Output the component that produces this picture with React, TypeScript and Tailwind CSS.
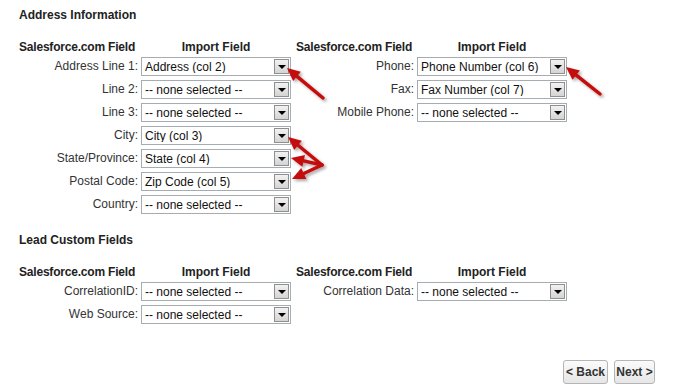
import React from "react";

type Row = { label: string; value: string };

const addressLeft: Row[] = [
  { label: "Address Line 1:", value: "Address (col 2)" },
  { label: "Line 2:", value: "-- none selected --" },
  { label: "Line 3:", value: "-- none selected --" },
  { label: "City:", value: "City (col 3)" },
  { label: "State/Province:", value: "State (col 4)" },
  { label: "Postal Code:", value: "Zip Code (col 5)" },
  { label: "Country:", value: "-- none selected --" },
];

const addressRight: Row[] = [
  { label: "Phone:", value: "Phone Number (col 6)" },
  { label: "Fax:", value: "Fax Number (col 7)" },
  { label: "Mobile Phone:", value: "-- none selected --" },
];

const customLeft: Row[] = [
  { label: "CorrelationID:", value: "-- none selected --" },
  { label: "Web Source:", value: "-- none selected --" },
];

const customRight: Row[] = [
  { label: "Correlation Data:", value: "-- none selected --" },
];

const Select = ({ value }: { value: string }) => (
  <div className="flex h-[19px] w-[150px] items-center border border-[#a5acb2] bg-white">
    <span className="flex-1 truncate pl-[3px] text-[12px] leading-none text-[#111]">
      {value}
    </span>
    <span className="mr-px flex h-[15px] w-[15px] items-center justify-center border border-[#8e8f8f] bg-gradient-to-b from-[#f2f2f2] to-[#d4d4d4]">
      <span className="mt-px h-0 w-0 border-x-[4px] border-t-[4px] border-x-transparent border-t-black" />
    </span>
  </div>
);

const Label = ({ text }: { text: string }) => (
  <div className="whitespace-nowrap text-right text-[12px] leading-[19px] text-[#333]">{text}</div>
);

const FieldGrid = ({ left, right }: { left: Row[]; right: Row[] }) => {
  const n = Math.max(left.length, right.length);
  const rows = [];
  for (let i = 0; i < n; i++) {
    const l = left[i];
    const r = right[i];
    rows.push(
      <React.Fragment key={i}>
        {l ? <Label text={l.label} /> : <div />}
        {l ? <Select value={l.value} /> : <div />}
        {r ? <Label text={r.label} /> : <div />}
        {r ? <Select value={r.value} /> : <div />}
      </React.Fragment>
    );
  }
  return (
    <div className="grid grid-cols-[119px_150px_120px_150px] gap-x-[3px] gap-y-[4px]">
      <div className="mb-[-1px] whitespace-nowrap text-[12px] font-bold leading-[14px] tracking-[-0.2px] text-[#222]">
        Salesforce.com Field
      </div>
      <div className="mb-[-1px] whitespace-nowrap text-center text-[12px] font-bold leading-[14px] text-[#222]">
        Import Field
      </div>
      <div className="mb-[-1px] whitespace-nowrap pl-[2px] text-[12px] font-bold leading-[14px] tracking-[-0.2px] text-[#222]">
        Salesforce.com Field
      </div>
      <div className="mb-[-1px] whitespace-nowrap text-center text-[12px] font-bold leading-[14px] text-[#222]">
        Import Field
      </div>
      {rows}
    </div>
  );
};

const arrows: [number, number, number, number][] = [
  [323, 98, 287, 68],
  [600, 94, 566, 67],
  [322, 165, 288, 137],
  [322, 165, 291, 158],
  [322, 165, 292, 179],
];

const Arrow = ({ t }: { t: [number, number, number, number] }) => {
  const [x1, y1, x2, y2] = t;
  const len = Math.hypot(x2 - x1, y2 - y1);
  const dx = (x2 - x1) / len;
  const dy = (y2 - y1) / len;
  const bx = x2 - dx * 13;
  const by = y2 - dy * 13;
  const nx = -dy * 6;
  const ny = dx * 6;
  return (
    <g>
      <line x1={x1} y1={y1} x2={bx} y2={by} stroke="#c40c0c" strokeWidth={3.5} strokeLinecap="round" />
      <polygon
        points={`${x2},${y2} ${bx + nx},${by + ny} ${bx - nx},${by - ny}`}
        fill="#c40c0c"
      />
    </g>
  );
};

export default function App() {
  return (
    <div className="relative h-[386px] w-[678px] overflow-hidden bg-white font-['Liberation_Sans',Arial,sans-serif]">
      <div className="pl-[19px] pt-[8px]">
        <h2 className="text-[12px] font-bold leading-[14px] text-[#222]">Address Information</h2>
        <div className="mt-[18px]">
          <FieldGrid left={addressLeft} right={addressRight} />
        </div>
        <h2 className="mt-[19px] text-[12px] font-bold leading-[14px] text-[#222]">
          Lead Custom Fields
        </h2>
        <div className="mt-[18px]">
          <FieldGrid left={customLeft} right={customRight} />
        </div>
      </div>
      <div className="mt-[36px] flex justify-end gap-[6px] pr-[23px]">
        <button className="h-[24px] w-[45px] rounded-[3px] border border-[#b5b5b5] bg-gradient-to-b from-[#fbfbfb] to-[#e6e6e6] text-[12px] font-bold text-[#333]">
          &lt; Back
        </button>
        <button className="h-[24px] w-[41px] rounded-[3px] border border-[#b5b5b5] bg-gradient-to-b from-[#fbfbfb] to-[#e6e6e6] text-[12px] font-bold text-[#333]">
          Next &gt;
        </button>
      </div>
      <svg className="pointer-events-none absolute left-0 top-0" width={678} height={386}>
        <defs>
          <filter id="sh" x="-20%" y="-20%" width="140%" height="140%">
            <feDropShadow dx="2" dy="2" stdDeviation="1.5" floodColor="#000" floodOpacity="0.35" />
          </filter>
        </defs>
        <g filter="url(#sh)">
          {arrows.map((a, i) => (
            <Arrow key={i} t={a} />
          ))}
        </g>
      </svg>
    </div>
  );
}
